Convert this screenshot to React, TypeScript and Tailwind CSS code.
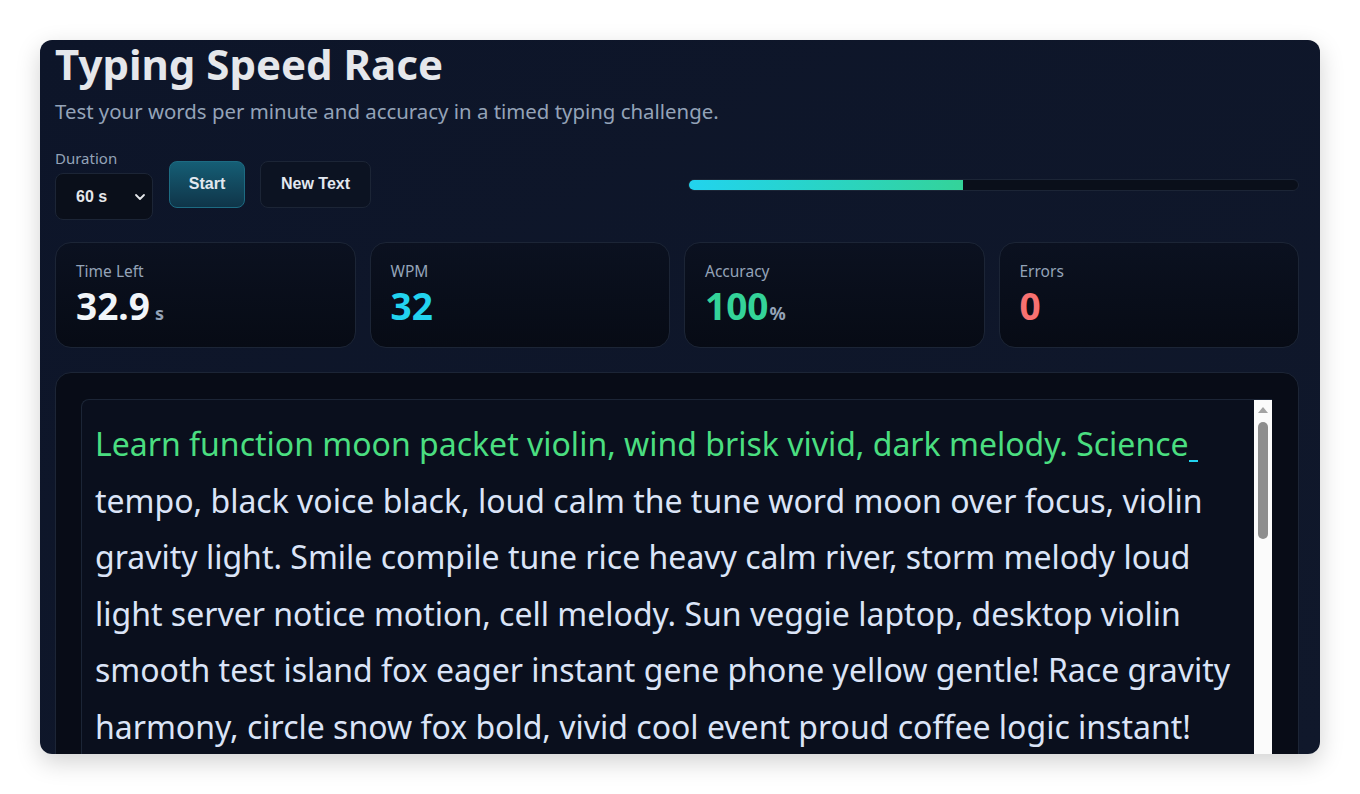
import React from "react";

const typed = "Learn function moon packet violin, wind brisk vivid, dark melody. Science";
const rest =
  "tempo, black voice black, loud calm the tune word moon over focus, violin gravity light. Smile compile tune rice heavy calm river, storm melody loud light server notice motion, cell melody. Sun veggie laptop, desktop violin smooth test island fox eager instant gene phone yellow gentle! Race gravity harmony, circle snow fox bold, vivid cool event proud coffee logic instant! Tune river bright light calm motion laptop violin.";

function Stat({ label, value, unit, color, unitGap }: { label: string; value: string; unit?: string; color: string; unitGap?: string }) {
  return (
    <div className="h-[106px] rounded-2xl border border-[#1c2536] bg-gradient-to-b from-[#0b1120] to-[#070b15] px-5 pt-[18px]">
      <div className="text-[15.5px] leading-5 text-[#94a3b8]">{label}</div>
      <div className="mt-[3px] flex items-baseline">
        <span className={`text-[37px] font-bold leading-[44px] ${color}`}>{value}</span>
        {unit ? <span className={`${unitGap ?? "ml-[5px]"} text-[18px] font-bold text-[#94a3b8]`}>{unit}</span> : null}
      </div>
    </div>
  );
}

export default function App() {
  return (
    <div className="min-h-[794px] bg-white pt-10" style={{ fontFamily: '"Noto Sans", sans-serif' }}>
      <div className="mx-10 h-[714px] overflow-hidden rounded-xl bg-gradient-to-br from-[#0d1529] to-[#10182b] shadow-[0_8px_24px_rgba(0,0,0,0.18)]">
        <div className="pl-[15px] pr-[21px]">
          <h1 className="mt-[-4px] text-[42px] font-bold leading-[56px] text-[#e5e7eb]">Typing Speed Race</h1>
          <p className="mt-[5px] text-[20.4px] leading-7 text-[#94a3b8]">
            Test your words per minute and accuracy in a timed typing challenge.
          </p>
          <div className="mt-[23px] flex items-center">
            <div className="flex flex-col">
              <span className="text-[15px] leading-5 text-[#94a3b8]">Duration</span>
              <div
                className="relative mt-[5px] flex h-[47px] w-[98px] items-center rounded-lg border border-[#1c2536] bg-[#0a0f1a] pl-[20px] text-[16px] font-bold text-[#e5e7eb]"
                style={{ fontFamily: '"Liberation Sans", Arial, sans-serif' }}
              >
                60 s
                <svg className="absolute right-[6px] top-[17px]" width="12" height="12" viewBox="0 0 12 12" fill="none">
                  <path d="M2 4l4 4 4-4" stroke="#e5e7eb" strokeWidth="1.8" strokeLinecap="round" strokeLinejoin="round" />
                </svg>
              </div>
            </div>
            <button
              className="ml-[16px] h-[47px] w-[76px] rounded-lg border border-[#1d6b82] bg-gradient-to-b from-[#155e75] to-[#0f3549] text-[16px] font-bold text-[#e2e8f0]"
              style={{ fontFamily: '"Liberation Sans", Arial, sans-serif' }}
            >
              Start
            </button>
            <button
              className="ml-[15px] h-[47px] w-[111px] rounded-lg border border-[#1c2536] bg-[#0c1322] text-[16px] font-bold text-[#e2e8f0]"
              style={{ fontFamily: '"Liberation Sans", Arial, sans-serif' }}
            >
              New Text
            </button>
            <div className="ml-auto mt-[2px] h-[12px] w-[611px] overflow-hidden rounded-full border border-[#1c2536] bg-[#0a0f1a]">
              <div className="h-full bg-gradient-to-r from-[#22d3ee] to-[#34d399]" style={{ width: "45%" }} />
            </div>
          </div>
          <div className="mt-[22px] grid grid-cols-4 gap-[14px]">
            <Stat label="Time Left" value="32.9" unit="s" color="text-[#f1f5f9]" />
            <Stat label="WPM" value="32" color="text-[#22d3ee]" />
            <Stat label="Accuracy" value="100" unit="%" color="text-[#34d399]" unitGap="ml-[1px]" />
            <Stat label="Errors" value="0" color="text-[#f87171]" />
          </div>
          <div className="mt-[24px] h-[500px] rounded-2xl border border-[#1c2536] bg-[#080c17] pl-[25px] pr-[26px] pt-[26px]">
            <div className="flex h-[420px] overflow-hidden rounded-l-lg border-y border-l border-[#1c2536] bg-[#0a0f1d]">
              <div className="flex-1 pl-[13px] pr-[12px] pt-[16px]">
                <p className="text-[32px] leading-[56.6px] text-[#dbe4f7]">
                  <span className="text-[#4ade80]">{typed}</span>
                  <span className="inline-block h-[1px] w-[9px] border-b-2 border-[#22d3ee] align-[-6px]" />{" "}
                  {rest}
                </p>
              </div>
              <div className="flex w-[18px] flex-col items-center bg-[#fbfbfb]">
                <svg className="mt-[6px]" width="12" height="8" viewBox="0 0 12 8">
                  <path d="M6 1L11 7H1z" fill="#a3a3a3" />
                </svg>
                <div className="mt-[8px] h-[117px] w-[10px] rounded-full bg-[#8e8e8e]" />
              </div>
            </div>
          </div>
        </div>
      </div>
    </div>
  );
}
